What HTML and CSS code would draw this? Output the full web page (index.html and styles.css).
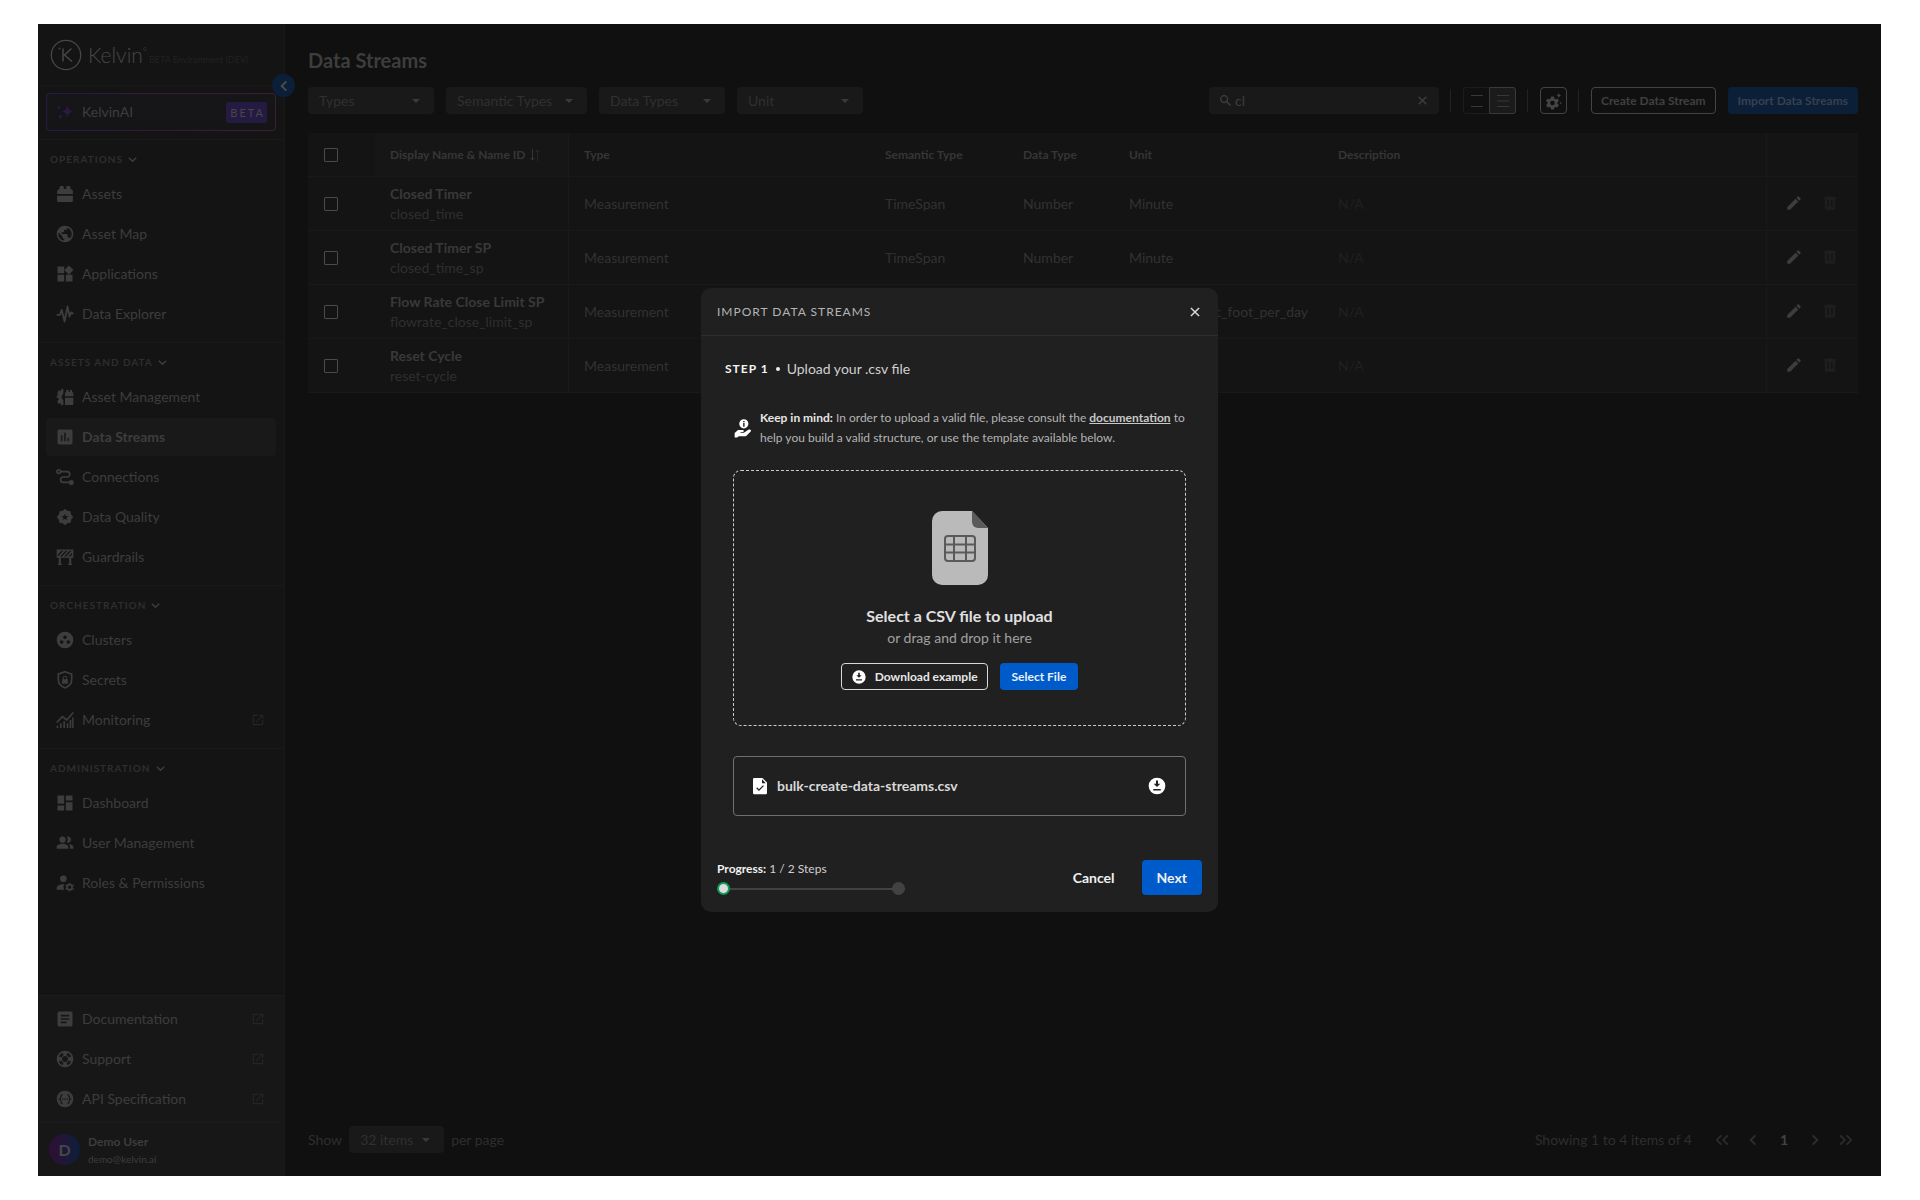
FILE: index.html
```html
<!DOCTYPE html>
<html lang="en">
<head>
<meta charset="utf-8">
<title>Kelvin - Data Streams</title>
<link rel="stylesheet" href="styles.css">
</head>
<body>
<svg class="sprite" aria-hidden="true">
  <symbol id="chev-down" viewBox="0 0 12 12"><path d="M2 4l4 4 4-4" fill="none" stroke="currentColor" stroke-width="1.6"/></symbol>
  <symbol id="chev-left" viewBox="0 0 12 12"><path d="M8 2L4 6l4 4" fill="none" stroke="currentColor" stroke-width="1.6"/></symbol>
  <symbol id="chev-right" viewBox="0 0 12 12"><path d="M4 2l4 4-4 4" fill="none" stroke="currentColor" stroke-width="1.6"/></symbol>
  <symbol id="chevs-left" viewBox="0 0 12 12"><path d="M5.500 2L1.500 6l4 4M11 2L7 6l4 4" fill="none" stroke="currentColor" stroke-width="1.4"/></symbol>
  <symbol id="chevs-right" viewBox="0 0 12 12"><path d="M6.500 2l4 4-4 4M1 2l4 4-4 4" fill="none" stroke="currentColor" stroke-width="1.4"/></symbol>
  <symbol id="caret" viewBox="0 0 8 8"><path d="M0 2h8L4 6z"/></symbol>
  <symbol id="close" viewBox="0 0 12 12"><path d="M2.500 2.500l7 7M9.500 2.500l-7 7" fill="none" stroke="currentColor" stroke-width="1.300"/></symbol>
  <symbol id="external" viewBox="0 0 24 24"><path d="M14,3V5H17.59L7.76,14.83L9.17,16.24L19,6.41V10H21V3M19,19H5V5H12V3H5C3.890,3 3,3.900 3,5V19A2,2 0 0,0 5,21H19A2,2 0 0,0 21,19V12H19V19Z"/></symbol>
  <symbol id="brick" viewBox="0 0 24 24"><path d="M4 12V7.500A1.500 1.500 0 0 1 5.500 6V4A1.500 1.500 0 0 1 7 2.500H9A1.500 1.500 0 0 1 10.500 4V6H13.500V4A1.500 1.500 0 0 1 15 2.500H17A1.500 1.500 0 0 1 18.500 4V6L20 6.500Q21.500 7 21.500 8.500V12H2.500V8.500Q2.500 7 4 6.500zM2.500 14H21.500V20A1.500 1.500 0 0 1 20 21.500H4A1.500 1.500 0 0 1 2.500 20z"/></symbol>
  <symbol id="earth" viewBox="0 0 24 24"><path d="M17.9,17.39C17.64,16.59 16.89,16 16,16H15V13A1,1 0 0,0 14,12H8V10H10A1,1 0 0,0 11,9V7H13A2,2 0 0,0 15,5V4.59C17.93,5.77 20,8.64 20,12C20,14.08 19.2,15.97 17.9,17.39M11,19.93C7.05,19.44 4,16.08 4,12C4,11.38 4.08,10.78 4.21,10.21L9,15V16A2,2 0 0,0 11,18M12,2A10,10 0 0,0 2,12A10,10 0 0,0 12,22A10,10 0 0,0 22,12A10,10 0 0,0 12,2Z"/></symbol>
  <symbol id="widgets" viewBox="0 0 24 24"><path d="M3 3h8v8H3zM3 13h8v8H3zM13 13h8v8h-8zM16.700 1.700l5.600 5.600-5.600 5.600L11.100 7.300z"/></symbol>
  <symbol id="pulse" viewBox="0 0 24 24"><path d="M2 13h4l2-6 3.500 14L15 3l2.500 12 2-5 2.500 2" fill="none" stroke="currentColor" stroke-width="2.200" stroke-linejoin="round"/></symbol>
  <symbol id="asset-mgmt" viewBox="0 0 24 24"><path d="M10 2.500v6a4 4 0 0 0 0 7v6L7.500 22 7 19.500l-2.500 1L2.500 17l2-1.700L4 13H2V10.500l2.300-.8-1.800-2L4.500 4 7 5l.5-2.500zM12 11V7l1.500-1V3.500h3V6h1.500V3.500h2.500V6L22 7v4zM12 13h10v8.500H12z"/></symbol>
  <symbol id="chart-box" viewBox="0 0 24 24"><path fill-rule="evenodd" d="M9 17H7V10H9zM13 17H11V7H13zM17 17H15V13H17zM19 3H5a2 2 0 0 0-2 2v14a2 2 0 0 0 2 2h14a2 2 0 0 0 2-2V5a2 2 0 0 0-2-2Z"/></symbol>
  <symbol id="route" viewBox="0 0 24 24"><g fill="none" stroke="currentColor" stroke-width="2"><circle cx="4.500" cy="5.500" r="2.200"/><path d="M7 5.500h7.500a3.200 3.200 0 0 1 0 6.500H10a3.200 3.200 0 0 0 0 6.500h7"/></g><circle cx="19.500" cy="18.500" r="3"/></symbol>
  <symbol id="seal" viewBox="0 0 24 24"><path fill-rule="evenodd" d="M12 2l2.700 2.500L18.500 5l.8 4L22 12l-2.500 3-.7 4-4 .5L12 22l-2.800-2.500-4-.5-.7-4L2 12l2.700-3 .8-4 3.800-.5zM12 8l-1.100 2.700-3 .2 2.300 1.900-.8 2.900L12 14.100l2.600 1.600-.8-2.900 2.300-1.900-3-.2z"/></symbol>
  <symbol id="barrier" viewBox="0 0 24 24"><path fill-rule="evenodd" d="M2 3h20v10H2zM3.500 9v2.500L10 4.500H7.700zM6 11.500h2.300l6.700-7h-2.300zM11 11.500h2.300l6.700-7h-2.300zM16 11.500h2.300l2.200-2.300V6.800zM4.500 13h2.500v7h-2.500zM17 13h2.500v7H17zM3.500 20h5v1.500h-5zM15.500 20h5v1.500h-5z"/></symbol>
  <symbol id="cluster" viewBox="0 0 24 24"><path fill-rule="evenodd" d="M12 2a10 10 0 1 0 0 20 10 10 0 0 0 0-20zM12 6.500a2.200 2.200 0 1 1 0 4.400 2.200 2.200 0 0 1 0-4.400zM8 12.200a2.200 2.200 0 1 1 0 4.400 2.200 2.200 0 0 1 0-4.400zM16 12.200a2.200 2.200 0 1 1 0 4.400 2.200 2.200 0 0 1 0-4.400z"/></symbol>
  <symbol id="shield" viewBox="0 0 24 24"><path d="M12 2l8 3v6.500c0 4.500-3.200 8.300-8 10-4.800-1.700-8-5.500-8-10V5z" fill="none" stroke="currentColor" stroke-width="2"/><path fill-rule="evenodd" d="M8.500 11h1V9.500a2.500 2.500 0 0 1 5 0V11h1v5.500h-7zM10.700 11h2.600V9.500a1.300 1.300 0 0 0-2.600 0z"/></symbol>
  <symbol id="monitoring" viewBox="0 0 24 24"><path d="M2 15l7-7 5 4 8-9" fill="none" stroke="currentColor" stroke-width="2"/><path d="M2 19h2v2.500H2zM6 16h2v5.500H6zM10 13.500h2v8h-2zM14 16h2v5.500h-2zM17.500 12h2v9.500h-2zM20.500 9h1.800v12.500h-1.800z"/></symbol>
  <symbol id="dashboard" viewBox="0 0 24 24"><path d="M13 3v6h8V3zM13 21h8V11h-8zM3 21h8v-6H3zM3 13h8V3H3z"/></symbol>
  <symbol id="users" viewBox="0 0 24 24"><circle cx="9" cy="8" r="3.700"/><path d="M2 19v-2c0-2.500 3.500-4 7-4s7 1.500 7 4v2zM14 4.600a3.700 3.700 0 1 1 0 6.800 5.500 5.500 0 0 0 0-6.800zM17 13.300c3 .4 5 1.700 5 3.700v2h-4v-2c0-1.500-.4-2.700-1-3.700z"/></symbol>
  <symbol id="user-cog" viewBox="0 0 24 24"><circle cx="10" cy="7" r="4"/><path d="M2 20v-2c0-2.500 3.500-4.500 8-4.500l1 .1a7 7 0 0 0 0 6.400z"/><circle cx="17.500" cy="17" r="3" fill="none" stroke="currentColor" stroke-width="2"/><path d="M16.500 12h2v2h-2zM16.500 20h2v2h-2zM12.300 15.300l1-1.700 1.800 1-1 1.700zM20.800 19.700l1-1.700 1.200 1-1 1.700zM12.300 18.700l1.800-1 1 1.700-1.800 1zM20.300 14.600l1.700-1 1 1.700-1.700 1z"/></symbol>
  <symbol id="doc" viewBox="0 0 24 24"><path fill-rule="evenodd" d="M5 3h14a2 2 0 0 1 2 2v14a2 2 0 0 1-2 2H5a2 2 0 0 1-2-2V5a2 2 0 0 1 2-2zM7 7v2h10V7zM7 11v2h10v-2zM7 15v2h7v-2z"/></symbol>
  <symbol id="lifebuoy" viewBox="0 0 24 24"><path fill-rule="evenodd" d="M12 2a10 10 0 1 0 0 20 10 10 0 0 0 0-20zM12 8.500a3.500 3.500 0 1 1 0 7 3.500 3.500 0 0 1 0-7zM9 4.600l1.300 2.800a5 5 0 0 0-2.900 2.900L4.600 9A8 8 0 0 1 9 4.600zM15 4.600A8 8 0 0 1 19.400 9l-2.800 1.300a5 5 0 0 0-2.900-2.900zM4.600 15l2.800-1.300a5 5 0 0 0 2.900 2.900L9 19.400A8 8 0 0 1 4.600 15zM19.400 15a8 8 0 0 1-4.400 4.400l-1.300-2.800a5 5 0 0 0 2.900-2.900z"/></symbol>
  <symbol id="api" viewBox="0 0 24 24"><circle cx="12" cy="12" r="10"/><g fill="none" stroke="#171717" stroke-width="1.500"><path d="M9 6.500c-3 0-1 4.500-3.500 5.500C8 13 6 17.500 9 17.500M15 6.500c3 0 1 4.500 3.500 5.500-2.500 1-.5 5.500-3.500 5.500M8.500 12h1.500M11.200 12h1.600M14 12h1.500"/></g></symbol>
  <symbol id="sparkle" viewBox="0 0 24 24"><path d="M15 4c1 5 2.500 6.500 7.500 7.500C17.500 12.500 16 14 15 19c-1-5-2.500-6.500-7.500-7.500C12.500 10.500 14 9 15 4zM4.500 4c.5 2 1 2.500 3 3-2 .5-2.500 1-3 3-.5-2-1-2.500-3-3 2-.5 2.500-1 3-3zM6.500 14c.5 2.300 1.200 3 3.500 3.500-2.300.5-3 1.200-3.500 3.500-.5-2.300-1.200-3-3.500-3.500 2.300-.5 3-1.200 3.500-3.500z"/></symbol>
  <symbol id="search" viewBox="0 0 14 14"><circle cx="5.500" cy="5.500" r="3.700" fill="none" stroke="currentColor" stroke-width="1.500"/><path d="M8.300 8.300l4 4" stroke="currentColor" stroke-width="1.700"/></symbol>
  <symbol id="pencil" viewBox="0 0 24 24"><path d="M20.710,7.040C21.100,6.650 21.100,6 20.710,5.630L18.370,3.290C18,2.900 17.350,2.900 16.960,3.290L15.120,5.120L18.870,8.870M3,17.250V21H6.750L17.810,9.930L14.060,6.180L3,17.250Z"/></symbol>
  <symbol id="trash" viewBox="0 0 24 24"><path fill-rule="evenodd" d="M9 3v1H4v2h1v13a2 2 0 0 0 2 2h10a2 2 0 0 0 2-2V6h1V4h-5V3zM8.500 8h2v9h-2zM13.500 8h2v9h-2z"/></symbol>
  <symbol id="gear" viewBox="0 0 24 24"><path fill-rule="evenodd" d="M8 6h4l.5 2.600 1.600.9 2.500-.9 2 3.400-2 1.700v2l2 1.700-2 3.400-2.500-.9-1.600.9L12 23.400H8l-.5-2.600-1.600-.9-2.500.9-2-3.400 2-1.700v-2l-2-1.700 2-3.400 2.500.9 1.600-.9zM10 11.500a3.100 3.100 0 1 0 0 6.200 3.100 3.100 0 0 0 0-6.200zM18.500 1c.5 2.500 1.200 3.300 3.700 3.800-2.500.5-3.200 1.200-3.700 3.700-.5-2.500-1.200-3.200-3.700-3.700 2.500-.5 3.200-1.300 3.700-3.800zM21 12.500c.3 1.500.8 2 2.300 2.300-1.500.3-2 .8-2.300 2.300-.3-1.500-.8-2-2.300-2.300 1.500-.3 2-.8 2.300-2.300z"/></symbol>
  <symbol id="download" viewBox="0 0 24 24"><path fill-rule="evenodd" d="M12 2a10 10 0 1 0 0 20 10 10 0 0 0 0-20zM10.800 5.500h2.400v3.700H16l-4 4-4-4h2.800zM7.500 15.500h9v1.900h-9z"/></symbol>
  <symbol id="hand-info" viewBox="0 0 24 24"><path fill-rule="evenodd" d="M13 1.500a5.500 5.500 0 1 0 0 11 5.500 5.500 0 0 0 0-11zM12.200 3.500h1.700v1.600h-1.700zM12.200 6h1.700v4.500h-1.700z"/><path d="M2 18l4-3.500h5.500c2 0 2 2.400 0 2.400H9v.9h4l5-3.400c2.500-1.500 4.500.3 3.300 1.800L15.500 22H7l-2 1.500H2z"/></symbol>
  <symbol id="file-check" viewBox="0 0 16 18"><path fill-rule="evenodd" d="M3 1h7.500L15 5.500V16a1.200 1.200 0 0 1-1.200 1.200H2.200A1.200 1.200 0 0 1 1 16V2.200A1.200 1.200 0 0 1 2.200 1zM10 2.200v4h3.800zM4.200 11.200l2.800 2.900 4.900-5-.9-.9-4 4-1.900-1.900z"/></symbol>
</svg>

<div class="app">
  <nav class="sidebar">
    <div class="brand">
      <svg class="brand-mark line" viewBox="0 0 32 32"><circle cx="16" cy="16" r="14.700" stroke-width="1.300"/><path d="M13 9.500v13M21.500 9.500l-7 6.500 7.500 6.500" stroke-width="1.500"/><circle cx="9.500" cy="9.500" r=".6"/></svg>
      <span class="brand-name">Kelvin<sup>°</sup></span>
      <span class="brand-env">BETA Environment (DEV)</span>
      <button class="collapse" aria-label="Collapse menu"><svg><use href="#chev-left"/></svg></button>
    </div>
    <div class="ai-wrap">
      <a class="nav-item ai" href="#"><svg><use href="#sparkle"/></svg>KelvinAI<span class="beta">BETA</span></a>
    </div>
    <section class="nav-group">
      <h2>Operations<svg><use href="#chev-down"/></svg></h2>
      <a class="nav-item" href="#"><svg><use href="#brick"/></svg>Assets</a>
      <a class="nav-item" href="#"><svg><use href="#earth"/></svg>Asset Map</a>
      <a class="nav-item" href="#"><svg><use href="#widgets"/></svg>Applications</a>
      <a class="nav-item" href="#"><svg><use href="#pulse"/></svg>Data Explorer</a>
    </section>
    <section class="nav-group">
      <h2>Assets and Data<svg><use href="#chev-down"/></svg></h2>
      <a class="nav-item" href="#"><svg><use href="#asset-mgmt"/></svg>Asset Management</a>
      <a class="nav-item active" href="#" aria-current="page"><svg><use href="#chart-box"/></svg>Data Streams</a>
      <a class="nav-item" href="#"><svg><use href="#route"/></svg>Connections</a>
      <a class="nav-item" href="#"><svg><use href="#seal"/></svg>Data Quality</a>
      <a class="nav-item" href="#"><svg><use href="#barrier"/></svg>Guardrails</a>
    </section>
    <section class="nav-group">
      <h2>Orchestration<svg><use href="#chev-down"/></svg></h2>
      <a class="nav-item" href="#"><svg><use href="#cluster"/></svg>Clusters</a>
      <a class="nav-item" href="#"><svg><use href="#shield"/></svg>Secrets</a>
      <a class="nav-item" href="#"><svg><use href="#monitoring"/></svg>Monitoring<svg class="ext"><use href="#external"/></svg></a>
    </section>
    <section class="nav-group last">
      <h2>Administration<svg><use href="#chev-down"/></svg></h2>
      <a class="nav-item" href="#"><svg><use href="#dashboard"/></svg>Dashboard</a>
      <a class="nav-item" href="#"><svg><use href="#users"/></svg>User Management</a>
      <a class="nav-item" href="#"><svg><use href="#user-cog"/></svg>Roles &amp; Permissions</a>
    </section>
    <div class="nav-bottom">
      <a class="nav-item" href="#"><svg><use href="#doc"/></svg>Documentation<svg class="ext"><use href="#external"/></svg></a>
      <a class="nav-item" href="#"><svg><use href="#lifebuoy"/></svg>Support<svg class="ext"><use href="#external"/></svg></a>
      <a class="nav-item" href="#"><svg><use href="#api"/></svg>API Specification<svg class="ext"><use href="#external"/></svg></a>
    </div>
    <div class="user">
      <span class="avatar">D</span>
      <div><div class="user-name">Demo User</div><div class="user-mail">demo@kelvin.ai</div></div>
    </div>
  </nav>

  <main class="main">
    <h1>Data Streams</h1>
    <div class="toolbar">
      <div class="picker"><select aria-label="Types"><option>Types</option></select><svg><use href="#caret"/></svg></div>
      <div class="picker wide"><select aria-label="Semantic Types"><option>Semantic Types</option></select><svg><use href="#caret"/></svg></div>
      <div class="picker"><select aria-label="Data Types"><option>Data Types</option></select><svg><use href="#caret"/></svg></div>
      <div class="picker"><select aria-label="Unit"><option>Unit</option></select><svg><use href="#caret"/></svg></div>
      <div class="search"><svg><use href="#search"/></svg><input type="text" value="cl" aria-label="Search"><button aria-label="Clear search"><svg><use href="#close"/></svg></button></div>
      <span class="sep"></span>
      <div class="density">
        <button aria-label="Comfortable rows"><svg class="line" viewBox="0 0 14 14"><path d="M1 1.500h12M1 12.500h12"/></svg></button>
        <button class="on" aria-label="Compact rows"><svg class="line" viewBox="0 0 14 14"><path d="M1 1.500h12M1 7h12M1 12.500h12"/></svg></button>
      </div>
      <span class="sep"></span>
      <button class="tool" aria-label="Table settings"><svg><use href="#gear"/></svg></button>
      <span class="sep"></span>
      <button class="btn outline">Create Data Stream</button>
      <button class="btn blue">Import Data Streams</button>
    </div>

    <table>
      <colgroup><col class="c-check"><col class="c-name"><col class="c-type"><col class="c-sem"><col class="c-data"><col class="c-unit"><col><col class="c-act"></colgroup>
      <thead>
        <tr><th><input type="checkbox" aria-label="Select all"></th><th class="sorted">Display Name &amp; Name ID<svg class="line" viewBox="0 0 12 12"><path d="M3.500 0v11M1.500 9l2 2 2-2"/><path opacity=".5" d="M8.500 12V1M6.500 3l2-2 2 2"/></svg></th><th>Type</th><th>Semantic Type</th><th>Data Type</th><th>Unit</th><th>Description</th><th class="act" aria-label="Actions"></th></tr>
      </thead>
      <tbody>
        <tr><td><input type="checkbox" aria-label="Select Closed Timer"></td><td class="name"><b>Closed Timer</b><span>closed_time</span></td><td>Measurement</td><td>TimeSpan</td><td>Number</td><td>Minute</td><td class="na">N/A</td><td class="act"><button aria-label="Edit"><svg><use href="#pencil"/></svg></button><button class="off" aria-label="Delete"><svg><use href="#trash"/></svg></button></td></tr>
        <tr><td><input type="checkbox" aria-label="Select Closed Timer SP"></td><td class="name"><b>Closed Timer SP</b><span>closed_time_sp</span></td><td>Measurement</td><td>TimeSpan</td><td>Number</td><td>Minute</td><td class="na">N/A</td><td class="act"><button aria-label="Edit"><svg><use href="#pencil"/></svg></button><button class="off" aria-label="Delete"><svg><use href="#trash"/></svg></button></td></tr>
        <tr><td><input type="checkbox" aria-label="Select Flow Rate Close Limit SP"></td><td class="name"><b>Flow Rate Close Limit SP</b><span>flowrate_close_limit_sp</span></td><td>Measurement</td><td></td><td></td><td>standard_cubic_foot_per_day</td><td class="na">N/A</td><td class="act"><button aria-label="Edit"><svg><use href="#pencil"/></svg></button><button class="off" aria-label="Delete"><svg><use href="#trash"/></svg></button></td></tr>
        <tr><td><input type="checkbox" aria-label="Select Reset Cycle"></td><td class="name"><b>Reset Cycle</b><span>reset-cycle</span></td><td>Measurement</td><td></td><td></td><td></td><td class="na">N/A</td><td class="act"><button aria-label="Edit"><svg><use href="#pencil"/></svg></button><button class="off" aria-label="Delete"><svg><use href="#trash"/></svg></button></td></tr>
      </tbody>
    </table>

    <footer class="pager">
      <label for="per-page">Show</label>
      <div class="picker small"><select id="per-page"><option>32 items</option></select><svg><use href="#caret"/></svg></div>
      <span>per page</span>
      <span class="count">Showing 1 to 4 items of 4</span>
      <div class="pages">
        <button aria-label="First page"><svg><use href="#chevs-left"/></svg></button>
        <button aria-label="Previous page"><svg><use href="#chev-left"/></svg></button>
        <button class="current">1</button>
        <button aria-label="Next page"><svg><use href="#chev-right"/></svg></button>
        <button aria-label="Last page"><svg><use href="#chevs-right"/></svg></button>
      </div>
    </footer>
  </main>

  <div class="overlay">
    <div class="modal" role="dialog" aria-labelledby="modal-title">
      <header class="modal-head"><h2 id="modal-title">Import Data Streams</h2><button aria-label="Close"><svg><use href="#close"/></svg></button></header>
      <div class="modal-body">
        <h3><b>STEP 1</b><span class="dot"></span>Upload your .csv file</h3>
        <div class="hint"><svg><use href="#hand-info"/></svg><p><b>Keep in mind:</b> In order to upload a valid file, please consult the <a href="#">documentation</a> to help you build a valid structure, or use the template available below.</p></div>
        <div class="drop">
          <svg class="csv" viewBox="0 0 56 74"><path d="M10 0h30l16 17v47a10 10 0 0 1-10 10H10A10 10 0 0 1 0 64V10A10 10 0 0 1 10 0z" fill="#bababa"/><path d="M40 0l16 17H46a6 6 0 0 1-6-6z" fill="#5a5a5a"/><g fill="none" stroke="#5a5a5a" stroke-width="2"><rect x="13" y="25" width="30" height="25" rx="3"/><path d="M22 25v25M34 25v25M13 33.500h30M13 41.500h30"/></g></svg>
          <strong>Select a CSV file to upload</strong>
          <p>or drag and drop it here</p>
          <div class="drop-actions"><button class="btn outline"><svg><use href="#download"/></svg>Download example</button><button class="btn blue">Select File</button></div>
        </div>
        <div class="file"><svg class="file-icon"><use href="#file-check"/></svg><span>bulk-create-data-streams.csv</span><button aria-label="Download file"><svg><use href="#download"/></svg></button></div>
      </div>
      <footer class="modal-foot">
        <div class="progress"><p><b>Progress:</b> 1 / 2 Steps</p><div class="track"><i class="done"></i><i></i></div></div>
        <button class="cancel">Cancel</button>
        <button class="next">Next</button>
      </footer>
    </div>
  </div>
</div>
</body>
</html>
```

FILE: styles.css
```css
* { box-sizing: border-box; margin: 0; padding: 0; }
body { background: #fff; padding: 24px 39px 24px 38px; font: 14px/20px Lato, "Open Sans", sans-serif; color: #333; }
.sprite { position: absolute; width: 0; height: 0; }
svg { fill: currentColor; flex: none; display: block; }
.line { fill: none; stroke: currentColor; }
button { background: none; border: 0; color: inherit; font: inherit; display: flex; align-items: center; justify-content: center; }
a { color: inherit; text-decoration: none; }
.app { position: relative; display: flex; min-height: calc(100vh - 48px); background: #101010; }

/* Sidebar */
.sidebar { width: 247px; flex: none; background: #141414; border-right: 1px solid #191919; display: flex; flex-direction: column; color: #3d3d3d; }
.brand { position: relative; height: 62px; display: flex; align-items: center; padding-left: 12px; border-bottom: 1px solid #191919; }
.brand-mark { width: 32px; height: 32px; color: #474747; }
.brand-name { margin-left: 6px; font-size: 21px; font-weight: 300; color: #474747; }
.brand-name sup { font-size: 10px; line-height: 0; vertical-align: 8px; }
.brand-env { margin: 10px 0 0 2px; font-size: 9px; line-height: 12px; color: #222; white-space: nowrap; }
.collapse { position: absolute; right: -11px; bottom: -12px; width: 23px; height: 23px; border-radius: 50%; background: #0c1f38; color: #4c4c4c; }
.collapse svg { width: 14px; height: 14px; }
.ai-wrap { padding: 6px 8px 7px; border-bottom: 1px solid #191919; }
.nav-item { display: flex; align-items: center; gap: 7px; height: 38px; margin: 1px 0; padding: 0 9px; }
.nav-item svg { width: 20px; height: 20px; }
.nav-item .ext { width: 14px; height: 14px; margin-left: auto; margin-right: 2px; color: #242424; }
.ai { border: 1px solid transparent; border-radius: 4px; padding: 0 8px; background: linear-gradient(#161618, #151416) padding-box, linear-gradient(90deg, #2a1847, #37222f) border-box; }
.ai svg { color: #2c1a45; }
.beta { margin-left: auto; background: #251a42; border-radius: 2px; padding: 0 2px 0 4px; font-size: 11px; line-height: 21px; letter-spacing: 2px; color: #474747; }
.nav-group { display: flex; flex-direction: column; padding: 0 8px 8px; border-bottom: 1px solid #191919; }
.nav-group.last { border-bottom: 0; margin-bottom: auto; }
.nav-group h2 { display: flex; align-items: center; gap: 4px; height: 34px; padding: 4px 0 0 4px; font-size: 10px; line-height: 12px; font-weight: 700; letter-spacing: 1px; text-transform: uppercase; color: #2e2e2e; }
.nav-group h2 svg { width: 11px; height: 11px; color: #3d3d3d; }
.active { font-weight: 700; background: #191919; border-radius: 4px; }
.nav-bottom { display: flex; flex-direction: column; background: #171717; border-top: 1px solid #1b1b1b; padding: 3px 8px; }
.user { background: #171717; border-top: 1px solid #1b1b1b; height: 54px; display: flex; align-items: center; gap: 8px; padding-left: 11px; }
.avatar { width: 31px; height: 31px; border-radius: 50%; background: linear-gradient(90deg, #300f33, #0c1f3c); display: flex; align-items: center; justify-content: center; font-size: 16px; font-weight: 700; color: #474747; }
.user-name { font-size: 12px; line-height: 18px; font-weight: 700; }
.user-mail { font-size: 10px; line-height: 16px; }

/* Main */
.main { flex: 1; min-width: 0; display: flex; flex-direction: column; padding: 23px; }
h1 { font-size: 20px; line-height: 26px; color: #3d3d3d; }
.toolbar { display: flex; align-items: center; gap: 12px; margin: 14px 0 19px; }
.picker { position: relative; display: flex; width: 126px; height: 27px; }
.picker.wide { width: 141px; }
.picker.small { width: 95px; }
.picker select { appearance: none; width: 100%; border: 0; border-radius: 4px; background: #191919; color: #303030; font: inherit; padding: 0 11px; }
.picker svg { position: absolute; right: 14px; top: 10px; width: 8px; height: 8px; color: #3a3a3a; pointer-events: none; }
.search { display: flex; align-items: center; gap: 3px; width: 230px; height: 27px; margin-left: auto; padding: 0 10px; border-radius: 4px; background: #191919; color: #3d3d3d; }
.search input { flex: 1; min-width: 0; border: 0; outline: 0; background: none; color: inherit; font: inherit; }
.search svg { width: 13px; height: 13px; }
.sep { width: 1px; height: 23px; margin-left: -1px; background: #222; }
.density { display: flex; }
.density button { width: 27px; height: 27px; border: 1px solid #1c1c1c; border-radius: 3px 0 0 3px; color: #383838; }
.density .on { margin-left: -1px; border-color: #3a3a3a; background: #1b1b1b; border-radius: 0 3px 3px 0; }
.density svg { width: 14px; height: 14px; }
.tool { width: 27px; height: 27px; border: 1px solid #444; border-radius: 4px; color: #444; }
.tool svg { width: 18px; height: 18px; }
.btn { height: 27px; border-radius: 4px; font-size: 12px; font-weight: 700; white-space: nowrap; gap: 8px; }
.btn.outline { padding: 0 9px; border: 1px solid #444; color: #404040; }
.btn.blue { padding: 0 10px; background: #0c1f38; color: #37414e; }

table { width: 100%; table-layout: fixed; border-collapse: separate; border-spacing: 0; background: #141414; }
.c-check { width: 67px; }
.c-name { width: 194px; }
.c-type { width: 301px; }
.c-sem { width: 138px; }
.c-data { width: 106px; }
.c-unit { width: 209px; }
.c-act { width: 92px; }
th, td { height: 54px; padding: 1px 15px 0; text-align: left; border-bottom: 1px solid #191919; white-space: nowrap; color: #323232; }
th { height: 44px; font-size: 12px; color: #363636; }
.sorted { background: #161616; border-right: 1px solid #191919; }
.sorted svg { display: inline-block; width: 12px; height: 12px; margin-left: 4px; vertical-align: -2px; }
.name { border-right: 1px solid #191919; }
.name b, .name span { display: block; }
.name b { color: #393939; }
.name span { color: #2f2f2f; }
td.na { color: #202020; }
.act { border-left: 1px solid #191919; }
.act button { display: inline-flex; width: 24px; height: 24px; color: #3d3d3d; }
.act button + button { margin-left: 12px; }
.act .off { color: #1e1e1e; }
.act svg { width: 18px; height: 18px; }
input[type="checkbox"] { appearance: none; display: block; width: 14px; height: 14px; margin-left: 1px; border: 1px solid #4a4a4a; border-radius: 1px; }

.pager { display: flex; align-items: center; gap: 7px; margin-top: auto; color: #2e2e2e; }
.count { margin-left: auto; margin-right: 11px; }
.pages { display: flex; gap: 7px; }
.pages button { width: 24px; height: 24px; }
.pages svg { width: 14px; height: 14px; }
.pages .current { color: #444; font-weight: 700; }

/* Import dialog */
.overlay { position: absolute; inset: 0; display: flex; align-items: center; justify-content: center; }
.modal { width: 517px; border-radius: 10px; background: #202020; color: #b4b4b4; }
.modal-head { display: flex; align-items: center; justify-content: space-between; height: 48px; padding: 0 16px; border-bottom: 1px solid #2d2d2d; }
.modal-head h2 { font-size: 12px; line-height: 16px; font-weight: 400; letter-spacing: 1px; text-transform: uppercase; }
.modal-head button { color: #d8d8d8; }
.modal-head svg { width: 14px; height: 14px; }
.modal-body { padding: 23px 32px 0; }
.modal-body h3 { display: flex; align-items: center; margin: 0 -8px; font-size: 14px; line-height: 20px; font-weight: 400; color: #d0d0d0; }
.modal-body h3 b { font-size: 12px; letter-spacing: 1px; color: #f4f4f4; }
.dot { width: 4px; height: 4px; margin: 0 7px; border-radius: 50%; background: #eee; }
.hint { display: flex; align-items: center; gap: 7px; margin: 29px -12px 22px 0; font-size: 12px; line-height: 20px; }
.hint svg { width: 20px; height: 20px; color: #fff; }
.hint b { color: #e6e6e6; }
.hint a { font-weight: 700; text-decoration: underline; color: #c8c8c8; }
.drop { display: flex; flex-direction: column; align-items: center; height: 256px; padding-top: 40px; border: 1px dashed #ccc; border-radius: 8px; }
.csv { width: 56px; height: 74px; }
.drop strong { margin-top: 19px; font-size: 16px; line-height: 24px; color: #e0e0e0; }
.drop p { line-height: 20px; color: #a0a0a0; }
.drop-actions { display: flex; gap: 12px; margin-top: 15px; }
.modal .btn.outline { border-color: #d8d8d8; color: #e8e8e8; }
.modal .btn.blue { padding: 0 12px; background: #005bca; color: #e8f0fa; }
.btn svg { width: 16px; height: 16px; color: #fff; }
.file { display: flex; align-items: center; gap: 9px; height: 60px; margin-top: 30px; padding: 0 18px; border: 1px solid #707070; border-radius: 4px; font-weight: 700; color: #d8d8d8; }
.file-icon { width: 16px; height: 18px; color: #fff; }
.file button { margin-left: auto; color: #fff; }
.file button svg { width: 20px; height: 20px; }
.modal-foot { display: flex; align-items: center; padding: 44px 16px 17px; color: #d0d0d0; }
.progress { width: 188px; margin-right: auto; padding-top: 1px; font-size: 12px; line-height: 16px; }
.progress b { color: #f0f0f0; }
.track { display: flex; justify-content: space-between; margin-top: 5px; background: linear-gradient(#424242, #424242) center / 100% 2px no-repeat; }
.track i { width: 13px; height: 13px; border-radius: 50%; background: #424242; }
.track .done { background: #ddd; border: 2px solid #0b9c56; }
.cancel, .next { height: 35px; padding: 0 15px; border-radius: 4px; font-weight: 700; color: #f0f0f0; }
.next { margin-left: 12px; background: #005bca; }
```
